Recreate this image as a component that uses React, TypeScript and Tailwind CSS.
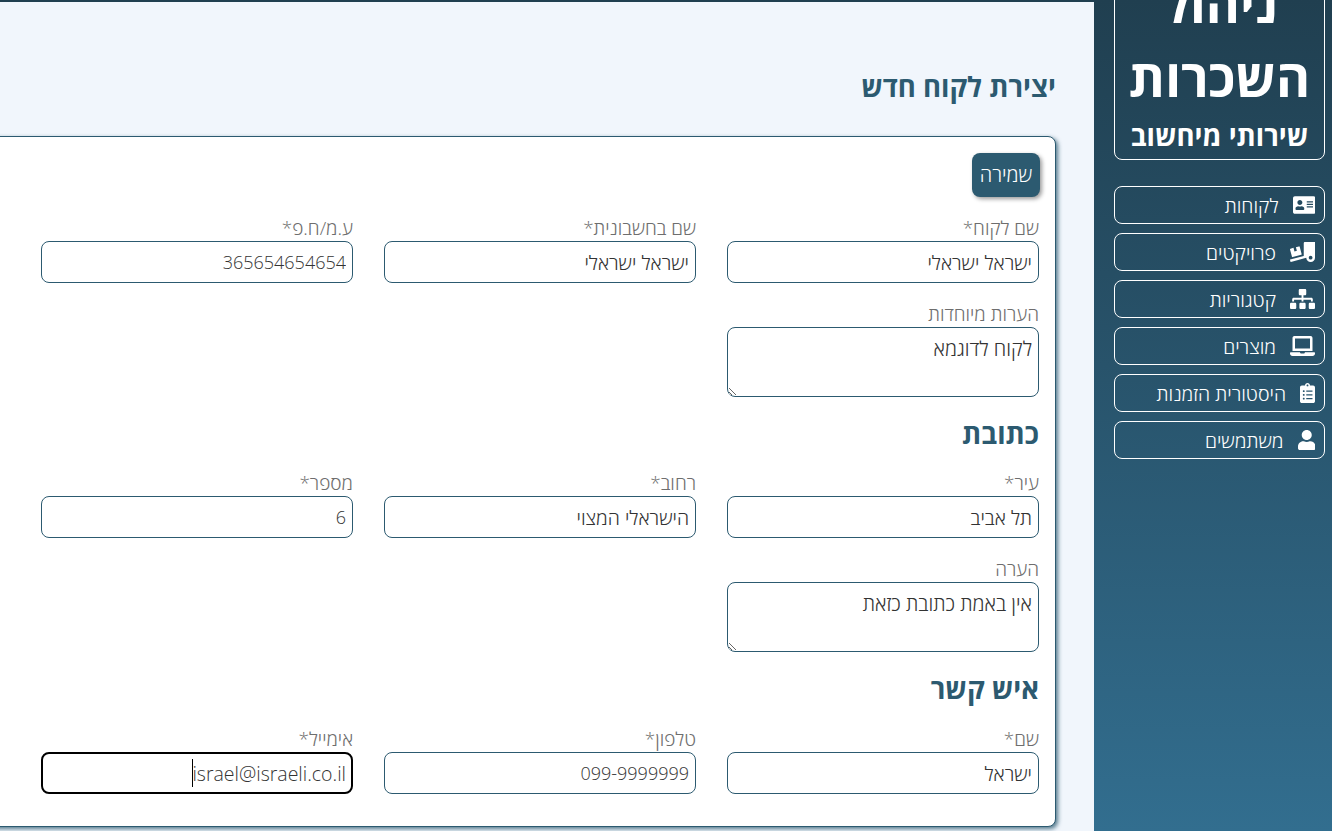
import { FaAddressCard, FaTruckLoading, FaSitemap, FaLaptop, FaClipboardList, FaUser } from "react-icons/fa";
import type { IconType } from "react-icons";

const navItems: { label: string; icon: IconType; iconWidth: string }[] = [
  { label: "לקוחות", icon: FaAddressCard, iconWidth: "w-[22.5px]" },
  { label: "פרויקטים", icon: FaTruckLoading, iconWidth: "w-[25px]" },
  { label: "קטגוריות", icon: FaSitemap, iconWidth: "w-[25px]" },
  { label: "מוצרים", icon: FaLaptop, iconWidth: "w-[25px]" },
  { label: "היסטורית הזמנות", icon: FaClipboardList, iconWidth: "w-[15px]" },
  { label: "משתמשים", icon: FaUser, iconWidth: "w-[17.5px]" },
];

function Field({ label, value, digits, focus }: { label: string; value: string; digits?: boolean; focus?: boolean }) {
  return (
    <label className="relative flex flex-col">
      <span className="h-[25px] text-[19px] leading-[25px] font-light text-[#6e6e6e]">{label}</span>
      <input
        defaultValue={value}
        className={`h-[42px] w-full rounded-lg bg-white font-light text-[#333] outline-none ${digits ? "text-[18px]" : "text-[19.5px]"} ${focus ? "border-2 border-black px-[5px]" : "border border-[#2c5a70] px-[6px]"}`}
      />
      {focus && <span className="absolute top-[32px] left-[151px] h-[28px] w-px bg-black" />}
    </label>
  );
}

function Notes({ label, value }: { label: string; value: string }) {
  return (
    <label className="col-start-1 flex flex-col">
      <span className="h-[25px] text-[19px] leading-[25px] font-light text-[#6e6e6e]">{label}</span>
      <textarea
        defaultValue={value}
        className="h-[70px] w-full rounded-lg border border-[#2c5a70] bg-white px-[6px] pt-[8px] text-[20px] leading-[26px] font-light text-[#333] outline-none"
      />
    </label>
  );
}

export default function App() {
  return (
    <div dir="rtl" className="flex h-[831px] w-[1332px] overflow-hidden bg-[#f1f6fc] font-['Open_Sans',sans-serif]">
      <aside className="h-full w-[238px] shrink-0 bg-gradient-to-b from-[#203f50] to-[#326e8f] pr-[7px] pl-[20px] text-white">
        <div className="-mt-[40px] flex h-[200px] flex-col items-center justify-end rounded-lg border border-white pb-[1px]">
          <div className="text-center text-[52px] leading-[74px] font-bold">ניהול השכרות</div>
          <div className="text-[27.5px] leading-[44px] font-bold">שירותי מיחשוב</div>
        </div>
        <nav className="mt-[26px] flex flex-col gap-[9px]">
          {navItems.map(({ label, icon: Icon, iconWidth }) => (
            <a key={label} className="flex h-[38px] items-center gap-[14px] rounded-lg border border-white pr-[9px] text-[19.5px] font-light">
              <Icon className={`h-[20px] shrink-0 ${iconWidth}`} />
              <span className="pt-[2px]">{label}</span>
            </a>
          ))}
        </nav>
      </aside>
      <main className="min-w-0 flex-1 border-t-2 border-[#203f50] pr-[38px]">
        <h1 className="mt-[65px] text-[27.5px] leading-[40px] font-bold text-[#2c5a70]">יצירת לקוח חדש</h1>
        <section className="mt-[29px] h-[691px] w-[1100px] shrink-0 rounded-lg border border-[#2c5a70] bg-white pt-[16px] pr-[16px] shadow-[2px_2px_4px_rgba(44,90,112,0.8)]">
          <button className="-mr-px h-[44px] w-[68px] rounded-lg bg-[#2c5a70] text-[20px] font-light text-white shadow-[2px_2px_4px_rgba(0,0,0,0.4)]">שמירה</button>
          <div className="mt-[19px] grid w-[998px] grid-cols-3 gap-x-[31px] gap-y-[19px]">
            <Field label="שם לקוח*" value="ישראל ישראלי" />
            <Field label="שם בחשבונית*" value="ישראל ישראלי" />
            <Field label="ע.מ/ח.פ*" value="365654654654" digits />
            <Notes label="הערות מיוחדות" value="לקוח לדוגמא" />
          </div>
          <h2 className="mt-[16px] w-[998px] text-[27.5px] leading-[42px] font-bold text-[#2c5a70]">כתובת</h2>
          <div className="mt-[16px] grid w-[998px] grid-cols-3 gap-x-[31px] gap-y-[19px]">
            <Field label="עיר*" value="תל אביב" />
            <Field label="רחוב*" value="הישראלי המצוי" />
            <Field label="מספר*" value="6" digits />
            <Notes label="הערה" value="אין באמת כתובת כזאת" />
          </div>
          <h2 className="mt-[16px] w-[998px] text-[27.5px] leading-[42px] font-bold text-[#2c5a70]">איש קשר</h2>
          <div className="mt-[17px] grid w-[998px] grid-cols-3 gap-x-[31px]">
            <Field label="שם*" value="ישראל" />
            <Field label="טלפון*" value="099-9999999" digits />
            <Field label="אימייל*" value="israel@israeli.co.il" focus />
          </div>
        </section>
      </main>
    </div>
  );
}
